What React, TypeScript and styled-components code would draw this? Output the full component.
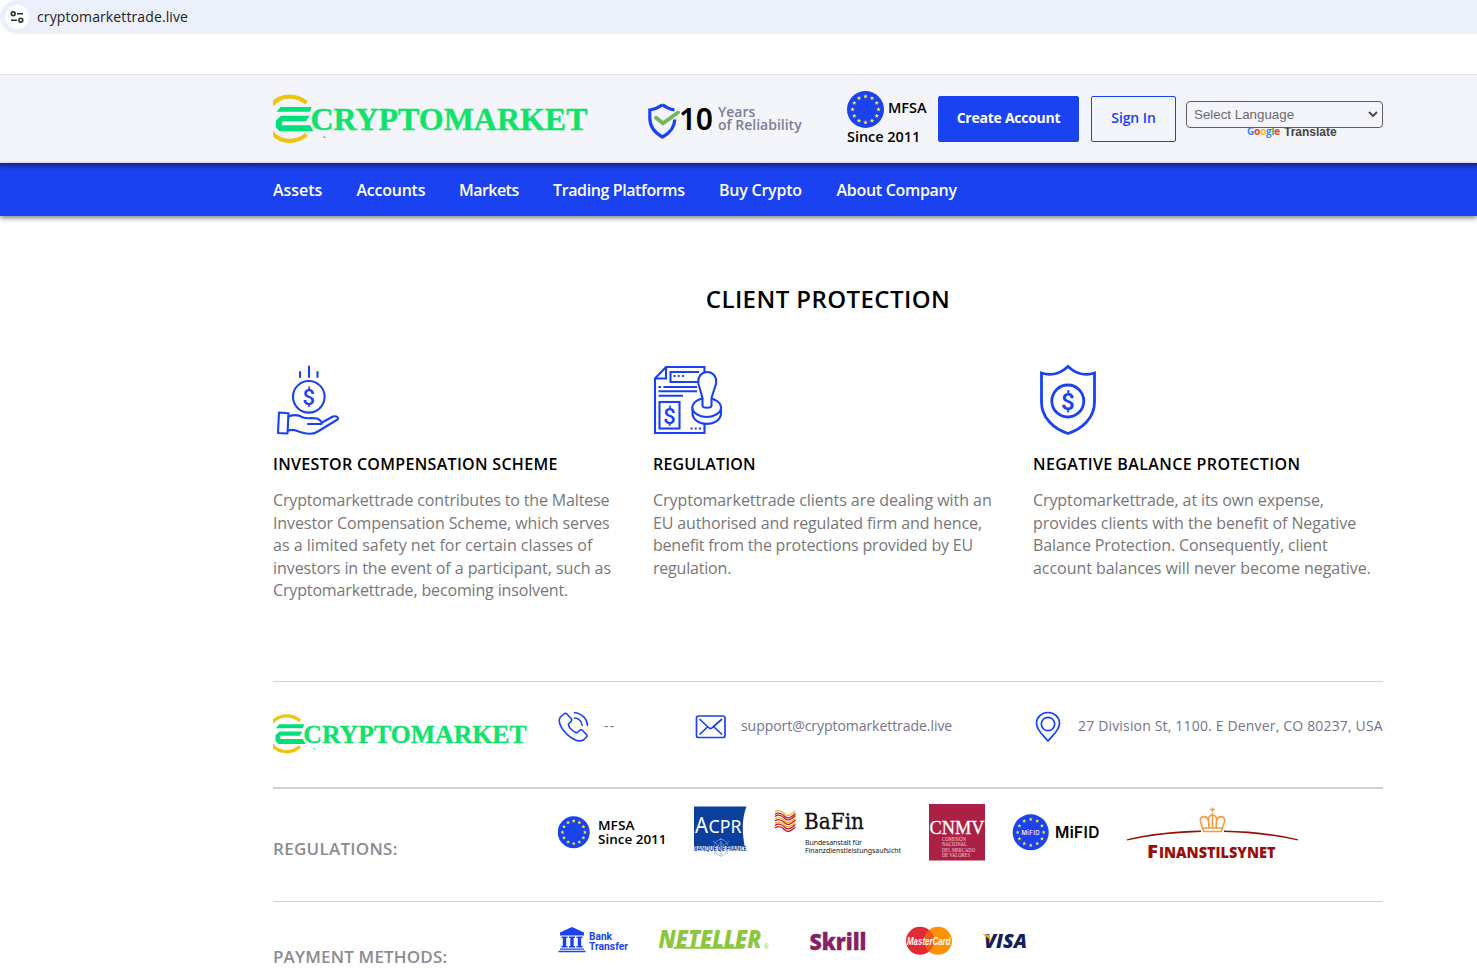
import React from 'react';
import styled, { createGlobalStyle } from 'styled-components';

const BLUE = '#1a42f1';

const GlobalStyle = createGlobalStyle`
  * { box-sizing: border-box; }
  body {
    margin: 0;
    background: #fff;
    color: #000;
    font-family: 'Open Sans', 'Noto Sans', sans-serif;
    font-size: 16px;
  }
  svg { display: block; flex: none; }
`;

const Page = styled.div`
  width: 100%;
  height: 968px;
  overflow: hidden;
`;

const Container = styled.div`
  width: 1110px;
  margin-left: 273px;
`;

/* Browser address bar */
const AddressBar = styled.div`
  display: flex;
  align-items: center;
  gap: 8px;
  height: 34px;
  padding-left: 5px;
  background: #ecf0fa;
  border-radius: 17px 0 0 17px;
`;

const SiteInfo = styled.div`
  display: grid;
  place-items: center;
  width: 24px;
  height: 24px;
  border-radius: 50%;
  background: #fff;
`;

const Url = styled.span`
  font-size: 14px;
  line-height: 20px;
  letter-spacing: 0.11px;
  color: #202124;
`;

/* Header */
const Header = styled.header`
  margin-top: 40px;
  height: 89px;
  border-top: 1px solid #dfdfe3;
  background: #f4f5fb;
`;

const HeaderRow = styled(Container)`
  display: flex;
  align-items: flex-start;
  height: 88px;
`;

const LogoSlot = styled.div`
  padding-top: 18px;
`;

const Reliability = styled.div`
  display: flex;
  margin: 27px 0 0 59px;
  width: 199px;
`;

const Ten = styled.span`
  width: 39px;
  font: 600 30px/34px 'Noto Sans', sans-serif;
  letter-spacing: -0.3px;
`;

const ReliabilityText = styled.span`
  display: flex;
  flex-direction: column;
  padding-top: 3px;
  font-weight: 600;
  font-size: 14px;
  line-height: 13px;
  color: #7e7e9a;
`;

const Mfsa = styled.div`
  width: 91px;
  margin-top: 16px;
  font-weight: 600;
  font-size: 14.5px;
  line-height: 18px;
  letter-spacing: -0.05px;
`;

const MfsaTop = styled.div`
  display: flex;
  align-items: center;
  gap: 4px;
  height: 37px;
`;

const MfsaName = styled.span`
  padding-bottom: 4px;
`;

const Button = styled.a<{ $outline?: boolean; $width: number; $gap: number }>`
  display: grid;
  place-items: center;
  width: ${p => p.$width}px;
  height: 46px;
  margin: 21px ${p => p.$gap}px 0 0;
  padding-bottom: 4px;
  border: 1px solid ${BLUE};
  border-radius: 2px;
  background: ${p => (p.$outline ? 'transparent' : BLUE)};
  color: ${p => (p.$outline ? BLUE : '#fff')};
  font-size: 14px;
  font-weight: ${p => (p.$outline ? 600 : 700)};
  letter-spacing: ${p => (p.$outline ? '-0.09px' : '-0.25px')};
`;

const Translate = styled.div`
  width: 197px;
  margin-top: 26px;
`;

const Select = styled.div`
  position: relative;
  z-index: 1;
  display: flex;
  align-items: center;
  justify-content: space-between;
  height: 27px;
  padding: 0 4px 0 7px;
  border: 1px solid #5f5f66;
  border-radius: 4px;
  background: #f4f5fb;
  color: #6a6a70;
  font: 13.33px 'Liberation Sans', Arial, sans-serif;
`;

const GoogleRow = styled.div`
  display: flex;
  align-items: center;
  gap: 4px;
  height: 14px;
  margin: -3px 0 0 61px;
  color: #444;
  font: bold 12px/14px 'Liberation Sans', Arial, sans-serif;
`;

const Google = styled.span`
  display: flex;
  width: 33px;
  padding-bottom: 2px;
  font: 700 10px/12px 'Open Sans', sans-serif;
  letter-spacing: -0.2px;
`;

const Letter = styled.span<{ $color: string }>`
  color: ${p => p.$color};
`;

/* Navigation */
const Nav = styled.nav`
  position: relative;
  height: 53px;
  background: linear-gradient(#10248a 0, #1632bd 3px, #1a3ee2 6px, ${BLUE} 9px);
  box-shadow: 0 2px 5px rgba(0, 0, 0, 0.5);
`;

const NavList = styled(Container)`
  display: flex;
  height: 53px;
  align-items: center;
`;

const NavItem = styled.a<{ $ls: number; $w: number }>`
  width: ${p => p.$w}px;
  color: #fff;
  font-weight: 600;
  letter-spacing: ${p => p.$ls}px;
  white-space: nowrap;
`;

/* Client protection */
const Title = styled.h1`
  margin: 65px 0 45px;
  font-size: 24px;
  font-weight: 600;
  line-height: 36px;
  letter-spacing: 0.42px;
  text-align: center;
`;

const Features = styled.section`
  display: grid;
  grid-template-columns: repeat(3, 380px);
  height: 319px;
`;

const FeatureTitle = styled.h2<{ $ls: number }>`
  margin: 14px 0 13px;
  font-size: 16px;
  font-weight: 600;
  line-height: 24px;
  letter-spacing: ${p => p.$ls}px;
`;

const Line = styled.span<{ $ls: number }>`
  display: block;
  color: #77777a;
  line-height: 22.5px;
  letter-spacing: ${p => p.$ls}px;
  white-space: nowrap;
`;

/* Footer */
const ContactRow = styled.div`
  display: flex;
  height: 106px;
  border-top: 1px solid #d2d2d6;
  padding-top: 29px;
`;

const FooterLogo = styled.div`
  width: 285px;
  padding-top: 2px;
`;

const ContactGap = styled.span<{ $wide?: boolean }>`
  width: ${p => (p.$wide ? 17 : 15)}px;
`;

const ContactText = styled.span<{ $ls: number; $w: number }>`
  width: ${p => p.$w}px;
  padding-top: 5px;
  color: #74748a;
  font-size: 14px;
  line-height: 20px;
  letter-spacing: ${p => p.$ls}px;
  white-space: nowrap;
`;

const LogoRow = styled.div<{ $thick?: boolean; $height: number; $gap: number; $pad: number }>`
  display: flex;
  gap: ${p => p.$gap}px;
  height: ${p => p.$height}px;
  padding-top: ${p => p.$pad}px;
  border-top: ${p => (p.$thick ? 2 : 1)}px solid #d2d2d6;
`;

const RowLabel = styled.span<{ $gap: number; $top: number; $ls: number }>`
  width: ${p => 285 - p.$gap}px;
  padding-top: ${p => p.$top}px;
  color: #8b8b91;
  font-size: 17px;
  font-weight: 600;
  line-height: 24px;
  letter-spacing: ${p => p.$ls}px;
  white-space: nowrap;
`;

const starPoints = (cx: number, cy: number, r: number) =>
  Array.from({ length: 10 }, (_, i) => {
    const a = (i * Math.PI) / 5 - Math.PI / 2;
    const q = i % 2 ? r * 0.48 : r;
    return `${(cx + q * Math.cos(a)).toFixed(2)},${(cy + q * Math.sin(a)).toFixed(2)}`;
  }).join(' ');

const Stars = ({ cx, cy, r, ring, size }: { cx: number; cy: number; r: number; ring: number; size: number }) => (
  <g>
    <circle cx={cx} cy={cy} r={r} fill={BLUE} />
    {Array.from({ length: 12 }, (_, i) => {
      const a = (i * Math.PI) / 6;
      return <polygon key={i} fill="#f8e43c" points={starPoints(cx + ring * Math.cos(a), cy + ring * Math.sin(a), size)} />;
    })}
  </g>
);

const Logo = ({ width }: { width: number }) => (
  <svg width={width} height={(width * 52) / 316} viewBox="0 0 316 52">
    <g fill="none" stroke="#efc410" strokeWidth="4.2">
      <path d="M-1 11.500C8 1.500 23 1 33.500 9.800" />
      <path d="M-1 39.800C8 50.200 23 50.500 33.500 41.500" />
    </g>
    <path d="M7.500 14H38.500L37 18.800H3.500Z M8 22.800H36.500L33 28.300H9.500L8.500 32.300H37L40.500 38.300H6.500L3 34.500V27.500Z" fill="#00e07a" />
    <path d="M50.500 42.500l2.500 2.500H50.500Z" fill="#12e26b" />
    <text x="37.500" y="36.800" textLength="277" lengthAdjust="spacingAndGlyphs" fontFamily="Liberation Serif, serif" fontWeight="bold" fontSize="30.500" fill="#12e26b" stroke="#12e26b" strokeWidth=".4">CRYPTOMARKET</text>
  </svg>
);

const SiteInfoIcon = () => (
  <svg width="14" height="12" viewBox="0 0 14 12" fill="none" stroke="#2c2d30" strokeWidth="1.6">
    <circle cx="3.200" cy="2.800" r="1.900" /><path d="M7 2.800H13M1 9.200H7" /><circle cx="10.800" cy="9.200" r="1.900" />
  </svg>
);

const CheckShield = () => (
  <svg width="31" height="38" viewBox="648 102 31 38" fill="none" overflow="visible">
    <path d="M662.500 104.800C658 108 654 109.500 649.800 110V118C649.800 127 655 133 662.500 137C670 133 674.500 127 674.800 119.500M662.500 104.800C666 107.500 670 109.300 674.500 110" stroke={BLUE} strokeWidth="3.200" />
    <path d="M656 117.800L663 123.300L678 112.500" stroke="#74b85c" strokeWidth="4" strokeLinecap="round" />
  </svg>
);

const HandCoinIcon = () => (
  <svg width="75" height="76" viewBox="273 362 75 76" fill="none" stroke={BLUE} strokeWidth="2.100" strokeLinecap="round" strokeLinejoin="round">
    <path d="M300 372V377M309 366.500V377M317.500 372V377" />
    <circle cx="308.800" cy="396.800" r="15.800" />
    <text x="308.800" y="404.500" textAnchor="middle" fontFamily="Roboto, sans-serif" fontSize="22" fontWeight="500" fill={BLUE} stroke="none">$</text>
    <path d="M279 412.500L288.500 413.300L287.500 433.500L278 433Z" />
    <path d="M288.500 416.500C295 414 299 415 303 417.500C307 419 312 417.500 317 418.500C321 420 323 424 321 424H308M322 422.500L333 416.500C337 415.500 339 418 337.500 419.500L317 432C312 435 307 434 302 432.500C297 431 293 428.500 288.500 430.500" />
  </svg>
);

const StampIcon = () => (
  <svg width="75" height="76" viewBox="653 362 75 76" fill="none" stroke={BLUE} strokeWidth="2.100">
    <path d="M666 367H704.500V433H655V378.500ZM666 367V378.500H655" />
    <path d="M699 372H670.500V382H698" />
    <path d="M673.500 376H684" strokeDasharray="2 2.200" />
    <path d="M658.500 387H661M663.500 387H697M658.500 391.300H697M658.500 395.700H683" />
    <rect x="659.500" y="402" width="20" height="26.500" />
    <text x="669.500" y="423.500" textAnchor="middle" fontFamily="Roboto, sans-serif" fontSize="22" fontWeight="500" fill={BLUE} stroke="none">$</text>
    <path d="M690.500 428.500H702" strokeDasharray="2 2.200" />
    <path d="M692.500 406.500V413C692.500 427.500 721 427.500 721 413V406.500" fill="#fff" />
    <ellipse cx="706.700" cy="407.500" rx="14.300" ry="9.500" fill="#fff" />
    <path d="M702.500 405.500V398L698.500 384C696 368 718.500 368 716 384L711.500 398V405.500C711.500 408.500 702.500 408.500 702.500 405.500Z" fill="#fff" />
  </svg>
);

const ShieldIcon = () => (
  <svg width="75" height="76" viewBox="1033 362 75 76" fill="none" stroke={BLUE} strokeWidth="2.800">
    <path d="M1068 366.500C1060 374 1050 376 1041.500 373V402C1041.500 418 1054 429 1068 433.500C1082 429 1094.500 418 1094.500 402V373C1086 376 1076 374 1068 366.500Z" />
    <circle cx="1067.800" cy="401" r="16" />
    <text x="1067.800" y="409.500" textAnchor="middle" fontFamily="Roboto, sans-serif" fontSize="24" fontWeight="600" fill={BLUE} stroke="none">$</text>
  </svg>
);

const PhoneIcon = () => (
  <svg width="31" height="31" viewBox="558 711 31 31" fill="none" stroke={BLUE} strokeWidth="1.600" strokeLinecap="round" strokeLinejoin="round">
    <path d="M561 716.500L564.500 713.500Q566 713 567 714L571.500 719Q572 720.500 571 721.500L568.500 724C568 727 574.500 733.500 577.500 732.500L580 730Q581.500 729.500 582.500 730.500L586.500 734.500Q587.500 736 586.500 737L583.500 740C575 744.500 557 728 559.500 719Q559.800 717.500 561 716.500Z" />
    <path d="M574.500 712.700C581.500 713 587 718.500 587.500 725.500M574.500 718C578.500 718 582 721.500 582.200 725.500" />
  </svg>
);

const MailIcon = () => (
  <svg width="31" height="31" viewBox="695 711 31 31" fill="none" stroke={BLUE} strokeWidth="1.700" strokeLinecap="round" strokeLinejoin="round">
    <rect x="696.500" y="716" width="28.500" height="21.500" rx="2" />
    <path d="M700 719.500L708.500 727.500Q710.500 729.500 712.500 727.500L721.500 719.500M700 734L707.500 727M721.500 734L714 727" />
  </svg>
);

const PinIcon = () => (
  <svg width="26" height="31" viewBox="1035 711 26 31" fill="none" stroke={BLUE} strokeWidth="1.700" strokeLinejoin="round">
    <path d="M1048 741C1044 736.500 1036.500 730 1036.500 723.500A11.500 11 0 0 1 1059.500 723.500C1059.500 730 1052 736.500 1048 741Z" />
    <circle cx="1048" cy="724" r="6.700" />
  </svg>
);

const MfsaLogo = () => (
  <svg width="110" height="64" viewBox="558 800 110 64" fontFamily="Open Sans, sans-serif" fontWeight="600" fontSize="12.300">
    <Stars cx={573.7} cy={832.3} r={16} ring={11.2} size={2} />
    <text x="598" y="829.700" textLength="36.500" lengthAdjust="spacingAndGlyphs">MFSA</text>
    <text x="598" y="844" textLength="68.500" lengthAdjust="spacingAndGlyphs">Since 2011</text>
  </svg>
);

const AcprLogo = () => (
  <svg width="55" height="64" viewBox="693 800 55 64">
    <path d="M694 806.500H746.500C742 818 741.500 832 745.500 850H694Z" fill="#0a3f9e" />
    <g fill="#fff" fontFamily="Noto Sans, sans-serif">
      <text x="695" y="832.500" fontSize="22" textLength="13" lengthAdjust="spacingAndGlyphs">A</text>
      <text x="708.500" y="832.500" fontSize="18.500" textLength="33" lengthAdjust="spacingAndGlyphs">CPR</text>
    </g>
    <rect x="693" y="846" width="55" height="5" fill="#fff" opacity=".85" />
    <g stroke="#8ba9dc" strokeWidth=".9" fill="none" strokeDasharray="2 1">
      <path d="M721 838V857M713 841L729 855M729 841L713 855M712 848H730" />
      <ellipse cx="721" cy="847.500" rx="7" ry="8" />
      <ellipse cx="721" cy="847.500" rx="3.500" ry="4" />
    </g>
    <text x="694" y="851" textLength="52.500" lengthAdjust="spacingAndGlyphs" fontFamily="Noto Sans, sans-serif" fontWeight="600" fontSize="6.200" fill="#0a3f9e">BANQUE DE FRANCE</text>
  </svg>
);

const BafinLogo = () => (
  <svg width="130" height="64" viewBox="773 800 130 64">
    <g fill="none" strokeWidth="1.300">
      {[812, 816.5, 821, 825.5].map((y, i) => (
        <g key={y}>
          <path d={`M775 ${y}C779 ${y - 3} 782 ${y - 1} 785 ${y + 2}S791 ${y + 3} 795.500 ${y - 1}`} stroke={i === 0 ? '#f2b51d' : '#c3172b'} />
          <path d={`M775 ${y + 2.5}C779 ${y - 0.5} 782 ${y + 1.5} 785 ${y + 4.5}S791 ${y + 5.5} 795.500 ${y + 1.5}`} stroke={i === 3 || i === 0 ? '#c3172b' : '#f2b51d'} />
        </g>
      ))}
    </g>
    <text x="804" y="829" textLength="60" lengthAdjust="spacingAndGlyphs" fontFamily="DejaVu Serif, serif" fontSize="23" fill="#111" stroke="#111" strokeWidth=".3">BaFin</text>
    <g fontFamily="Noto Sans, sans-serif" fontSize="7" fill="#222">
      <text x="805" y="844.500" textLength="57">Bundesanstalt für</text>
      <text x="805" y="853" textLength="96">Finanzdienstleistungsaufsicht</text>
    </g>
  </svg>
);

const CnmvLogo = () => (
  <svg width="58" height="64" viewBox="928 800 58 64" fontFamily="Liberation Serif, serif">
    <rect x="929" y="804" width="56" height="56.500" fill="#ac2045" />
    <text x="929.500" y="834" textLength="55" lengthAdjust="spacingAndGlyphs" fontSize="18.500" fill="#fff" stroke="#fff" strokeWidth=".3">CNMV</text>
    <g fill="#f0d0d8" fontSize="5.100">
      <text x="942" y="841" textLength="24" lengthAdjust="spacingAndGlyphs">COMISIÓN</text>
      <text x="942" y="846.300" textLength="25" lengthAdjust="spacingAndGlyphs">NACIONAL</text>
      <text x="942" y="851.600" textLength="33" lengthAdjust="spacingAndGlyphs">DEL MERCADO</text>
      <text x="942" y="857" textLength="28" lengthAdjust="spacingAndGlyphs">DE VALORES</text>
    </g>
  </svg>
);

const MifidLogo = () => (
  <svg width="90" height="64" viewBox="1011 800 90 64">
    <Stars cx={1030.7} cy={832.3} r={18} ring={13} size={2} />
    <text x="1021.500" y="834.700" textLength="18" fontFamily="Inter, sans-serif" fontWeight="500" fontSize="6" fill="#fff">MiFID</text>
    <text x="1055" y="838" textLength="44.500" fontFamily="Inter, sans-serif" fontWeight="600" fontSize="15.500">MiFID</text>
  </svg>
);

const FinansLogo = () => (
  <svg width="174" height="64" viewBox="1126 800 174 64">
    <g fill="none" stroke="#f49a3f" strokeWidth="1.600">
      <path d="M1212.500 807.500V812M1210.200 809.500H1214.800M1204 832L1200.500 822C1199 815 1207 815 1208.500 821L1209 828M1221 832L1224.500 822C1226 815 1218 815 1216.500 821L1216 828M1208.500 821C1207 813 1218 813 1216.500 821M1212.500 813V828M1203 828H1222M1204 831.500H1221" />
    </g>
    <g fill="#980f06">
      <path d="M1127 839.200C1150 833.500 1175 831 1201 830.500V832C1176 832.800 1151 835.200 1127 840.500Z M1298 839.200C1275 833.500 1250 831 1224 830.500V832C1249 832.800 1274 835.200 1298 840.500Z" />
      <g fontFamily="Open Sans, sans-serif" fontWeight="800">
        <text x="1147" y="857.500" fontSize="17.500" textLength="11" lengthAdjust="spacingAndGlyphs">F</text>
        <text x="1159" y="857.500" fontSize="15" textLength="116.500" lengthAdjust="spacingAndGlyphs">INANSTILSYNET</text>
      </g>
    </g>
  </svg>
);

const BankLogo = () => (
  <svg width="72" height="48" viewBox="558 920 72 48" fill={BLUE}>
    <path d="M560 932.500L572 927L584 932.500V935.500H560Z M561.500 936.500H567.500V938H566.200V946H567.500V947.500H561.500V946H562.800V938H561.500Z M569 936.500H575V938H573.700V946H575V947.500H569V946H570.300V938H569Z M576.500 936.500H582.500V938H581.200V946H582.500V947.500H576.500V946H577.800V938H576.500Z M560 948.500H584V949.800H560Z M558.500 950.800H585.500V952.200H558.500Z" />
    <g fontFamily="Roboto, sans-serif" fontWeight="700" fontSize="10">
      <text x="589" y="939.500" textLength="23" lengthAdjust="spacingAndGlyphs">Bank</text>
      <text x="589" y="950" textLength="39" lengthAdjust="spacingAndGlyphs">Transfer</text>
    </g>
  </svg>
);

const NetellerLogo = () => (
  <svg width="113" height="48" viewBox="657 920 113 48" fill="#8cc63f">
    <text x="658.500" y="947.500" textLength="103" lengthAdjust="spacingAndGlyphs" fontFamily="Open Sans, sans-serif" fontWeight="800" fontStyle="italic" fontSize="24.500">NETELLER</text>
    <path d="M674 946.700H744L743.500 948.700H673.500Z" />
    <text x="764" y="949" fontFamily="Liberation Sans, sans-serif" fontSize="6.500">®</text>
  </svg>
);

const SkrillLogo = () => (
  <svg width="81" height="48" viewBox="797 920 81 48">
    <text x="809.500" y="949.700" textLength="57" lengthAdjust="spacingAndGlyphs" fontFamily="Open Sans, sans-serif" fontWeight="800" fontSize="23" fill="#862165" stroke="#862165" strokeWidth=".3">Skrill</text>
  </svg>
);

const MasterCardLogo = () => (
  <svg width="49" height="48" viewBox="905 920 49 48">
    <circle cx="938" cy="940.800" r="14" fill="#ff9204" />
    <circle cx="920" cy="940.800" r="14" fill="#e22936" />
    <path d="M929 930A14 14 0 0 1 929 951.500A14 14 0 0 1 929 930Z" fill="#f05a22" />
    <text x="907" y="944.500" textLength="43.500" lengthAdjust="spacingAndGlyphs" fontFamily="Liberation Sans, sans-serif" fontWeight="bold" fontStyle="italic" fontSize="10" fill="#fff">MasterCard</text>
  </svg>
);

const VisaLogo = () => (
  <svg width="48" height="48" viewBox="981 920 48 48">
    <text x="984" y="947.800" textLength="43" lengthAdjust="spacingAndGlyphs" fontFamily="Open Sans, sans-serif" fontWeight="800" fontStyle="italic" fontSize="18.500" fill="#11205b">VISA</text>
    <path d="M982 934.300H987.500Q989.500 935 990 937L991 942C988.500 938 985.500 935.800 982 934.300Z" fill="#f6a11c" />
  </svg>
);

const NAV = [
  { label: 'Assets', ls: -0.05, w: 83.5 },
  { label: 'Accounts', ls: -0.24, w: 102.5 },
  { label: 'Markets', ls: -0.54, w: 94 },
  { label: 'Trading Platforms', ls: -0.39, w: 166 },
  { label: 'Buy Crypto', ls: -0.23, w: 117.5 },
  { label: 'About Company', ls: -0.3, w: 121 },
];

const FEATURES: { title: string; ls: number; Icon: () => React.JSX.Element; lines: [string, number][] }[] = [
  {
    title: 'INVESTOR COMPENSATION SCHEME', ls: 0.31, Icon: HandCoinIcon,
    lines: [
      ['Cryptomarkettrade contributes to the Maltese', -0.16],
      ['Investor Compensation Scheme, which serves', -0.1],
      ['as a limited safety net for certain classes of', -0.01],
      ['investors in the event of a participant, such as', -0.07],
      ['Cryptomarkettrade, becoming insolvent.', -0.15],
    ],
  },
  {
    title: 'REGULATION', ls: 0.17, Icon: StampIcon,
    lines: [
      ['Cryptomarkettrade clients are dealing with an', -0.05],
      ['EU authorised and regulated firm and hence,', -0.14],
      ['benefit from the protections provided by EU', -0.2],
      ['regulation.', -0.2],
    ],
  },
  {
    title: 'NEGATIVE BALANCE PROTECTION', ls: 0.4, Icon: ShieldIcon,
    lines: [
      ['Cryptomarkettrade, at its own expense,', -0.09],
      ['provides clients with the benefit of Negative', -0.08],
      ['Balance Protection. Consequently, client', -0.12],
      ['account balances will never become negative.', -0.04],
    ],
  },
];

const GOOGLE: [string, string][] = [['G', '#4285f4'], ['o', '#ea4335'], ['o', '#fbbc05'], ['g', '#4285f4'], ['l', '#34a853'], ['e', '#ea4335']];

export default function App() {
  return (
    <Page>
      <GlobalStyle />
      <AddressBar>
        <SiteInfo><SiteInfoIcon /></SiteInfo>
        <Url>cryptomarkettrade.live</Url>
      </AddressBar>
      <Header>
        <HeaderRow>
          <LogoSlot><Logo width={316} /></LogoSlot>
          <Reliability>
            <CheckShield />
            <Ten>10</Ten>
            <ReliabilityText><span>Years</span><span>of Reliability</span></ReliabilityText>
          </Reliability>
          <Mfsa>
            <MfsaTop>
              <svg width="37" height="37" viewBox="0 0 37 37"><Stars cx={18.5} cy={18.5} r={18.5} ring={13} size={2.3} /></svg>
              <MfsaName>MFSA</MfsaName>
            </MfsaTop>
            Since 2011
          </Mfsa>
          <Button $width={141} $gap={12}>Create Account</Button>
          <Button $outline $width={85} $gap={10}>Sign In</Button>
          <Translate>
            <Select>
              Select Language
              <svg width="10" height="7" viewBox="0 0 10 7" fill="none" stroke="#4d4d52" strokeWidth="2"><path d="M1 1L5 5L9 1" /></svg>
            </Select>
            <GoogleRow>
              <Google>{GOOGLE.map(([c, color], i) => <Letter key={i} $color={color}>{c}</Letter>)}</Google>
              Translate
            </GoogleRow>
          </Translate>
        </HeaderRow>
      </Header>
      <Nav>
        <NavList>
          {NAV.map(n => <NavItem key={n.label} $ls={n.ls} $w={n.w}>{n.label}</NavItem>)}
        </NavList>
      </Nav>
      <Container>
        <Title>CLIENT PROTECTION</Title>
        <Features>
          {FEATURES.map(({ title, ls, Icon, lines }) => (
            <article key={title}>
              <Icon />
              <FeatureTitle $ls={ls}>{title}</FeatureTitle>
              {lines.map(([text, s]) => <Line key={text} $ls={s}>{text}</Line>)}
            </article>
          ))}
        </Features>
        <footer>
          <ContactRow>
            <FooterLogo><Logo width={255} /></FooterLogo>
            <PhoneIcon />
            <ContactGap />
            <ContactText $ls={1.2} $w={91}>--</ContactText>
            <MailIcon />
            <ContactGap />
            <ContactText $ls={-0.05} $w={294}>support@cryptomarkettrade.live</ContactText>
            <PinIcon />
            <ContactGap $wide />
            <ContactText $ls={0.17} $w={305}>27 Division St, 1100. E Denver, CO 80237, USA</ContactText>
          </ContactRow>
          <LogoRow $thick $height={114} $gap={25} $pad={11}>
            <RowLabel $gap={25} $top={37} $ls={0.28}>REGULATIONS:</RowLabel>
            <MfsaLogo /><AcprLogo /><BafinLogo /><CnmvLogo /><MifidLogo /><FinansLogo />
          </LogoRow>
          <LogoRow $height={67} $gap={27} $pad={18}>
            <RowLabel $gap={27} $top={25} $ls={0.17}>PAYMENT METHODS:</RowLabel>
            <BankLogo /><NetellerLogo /><SkrillLogo /><MasterCardLogo /><VisaLogo />
          </LogoRow>
        </footer>
      </Container>
    </Page>
  );
}
